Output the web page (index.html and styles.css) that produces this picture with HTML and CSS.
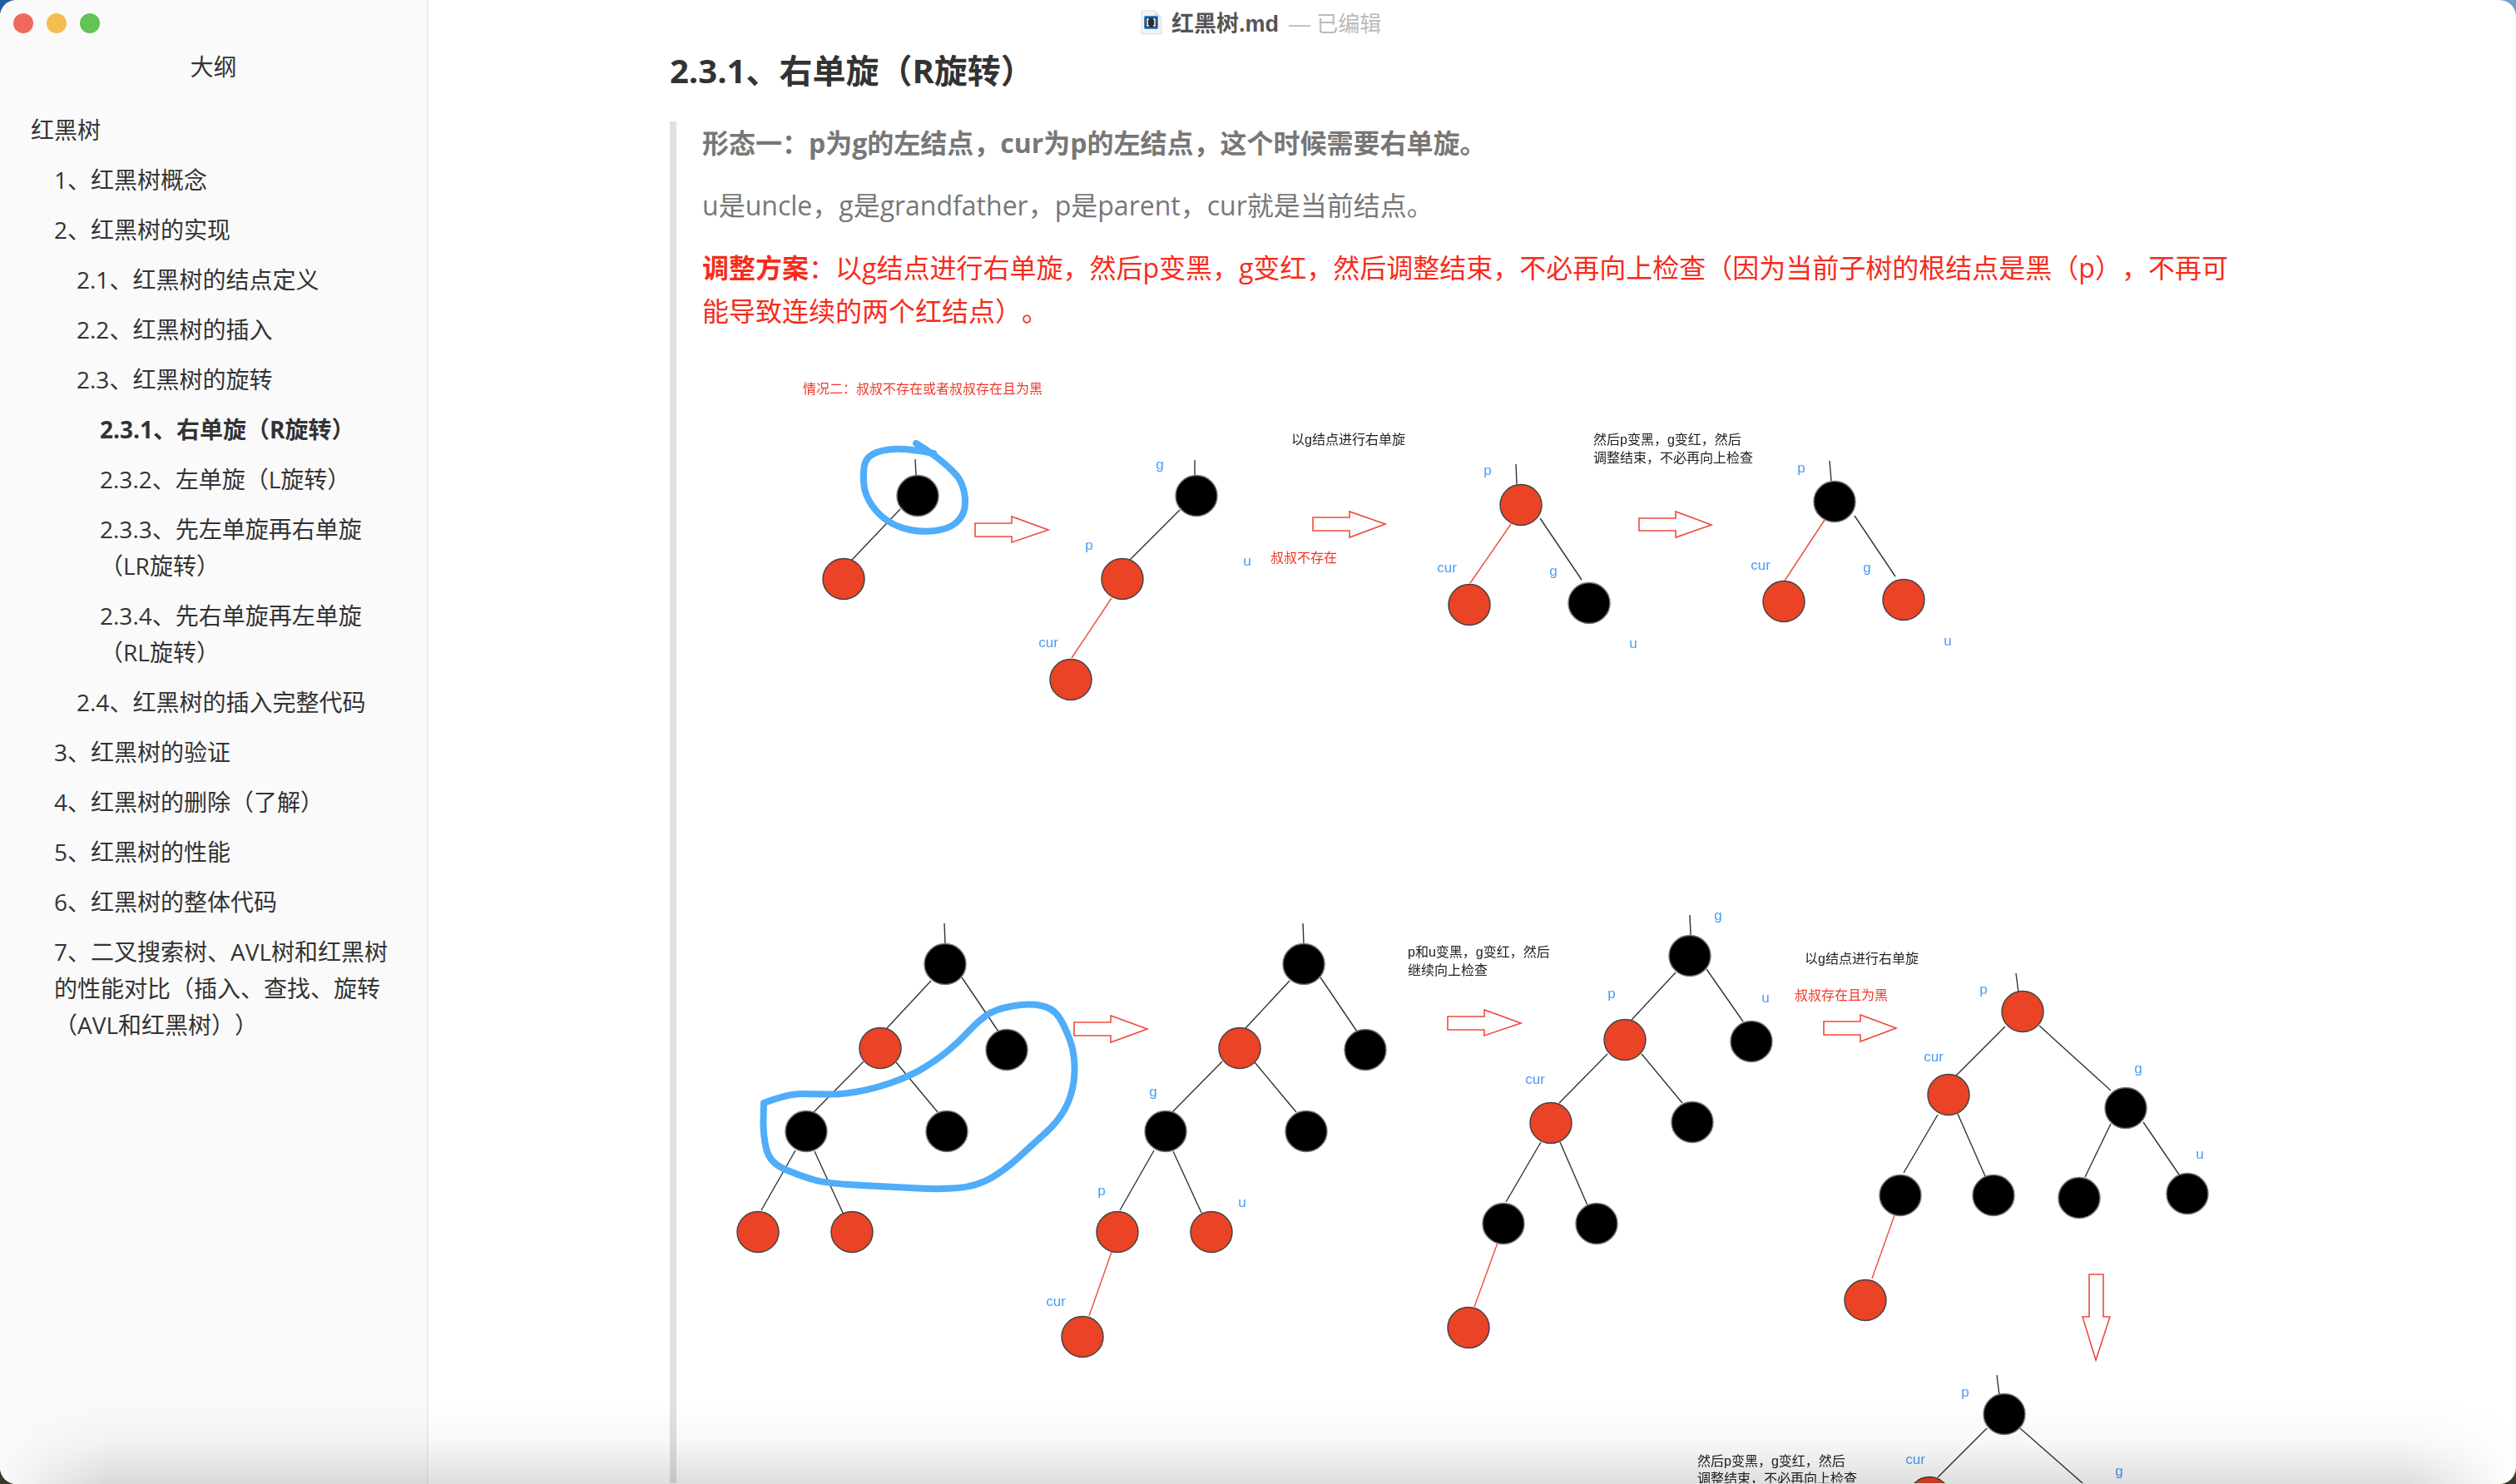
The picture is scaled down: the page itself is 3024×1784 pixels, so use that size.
FILE: index.html
```html
<!DOCTYPE html>
<html lang="zh-CN">
  <head>
    <meta charset="UTF-8" />
    <meta name="viewport" content="width=device-width, initial-scale=1.0" />
    <title>红黑树.md</title>
    <link rel="stylesheet" href="styles.css">
  </head>
  <body>
    <div class="window">
      <aside class="sidebar">
        <div class="lights">
          <span class="light light-red"></span>
          <span class="light light-yellow"></span>
          <span class="light light-green"></span>
        </div>
        <div class="sidebar-title">大纲</div>
        <ul class="outline">
          <li class="lv1">红黑树</li>
          <li class="lv2">1、红黑树概念</li>
          <li class="lv2">2、红黑树的实现</li>
          <li class="lv3">2.1、红黑树的结点定义</li>
          <li class="lv3">2.2、红黑树的插入</li>
          <li class="lv3">2.3、红黑树的旋转</li>
          <li class="lv4 active">2.3.1、右单旋（R旋转）</li>
          <li class="lv4">2.3.2、左单旋（L旋转）</li>
          <li class="lv4">2.3.3、先左单旋再右单旋<br>（LR旋转）</li>
          <li class="lv4">2.3.4、先右单旋再左单旋<br>（RL旋转）</li>
          <li class="lv3">2.4、红黑树的插入完整代码</li>
          <li class="lv2">3、红黑树的验证</li>
          <li class="lv2">4、红黑树的删除（了解）</li>
          <li class="lv2">5、红黑树的性能</li>
          <li class="lv2">6、红黑树的整体代码</li>
          <li class="lv2">7、二叉搜索树、AVL树和红黑树<br>的性能对比（插入、查找、旋转<br>（AVL和红黑树））</li>
        </ul>
      </aside>

      <main class="main">
        <h3>2.3.1、右单旋（R旋转）</h3>
        <blockquote>
          <p><strong>形态一：p为g的左结点，cur为p的左结点，这个时候需要右单旋。</strong></p>
          <p>u是uncle，g是grandfather，p是parent，cur就是当前结点。</p>
          <p class="red"><strong>调整方案</strong>：以g结点进行右单旋，然后p变黑，g变红，然后调整结束，不必再向上检查（因为当前子树的根结点是黑（p），不再可<br>能导致连续的两个红结点）。</p>

          <!-- viewBox uses page coordinates so the drawing is easy to read against the screenshot -->
          <svg class="diagram" viewBox="844 424 1850 1360" width="1850" height="1360">
            <text class="note-red" x="965" y="474">情况二：叔叔不存在或者叔叔存在且为黑</text>

            <!-- top row, first tree -->
            <line class="edge" x1="1100" y1="553" x2="1101" y2="573" />
            <line class="edge" x1="1082" y1="613" x2="1023" y2="675" />
            <ellipse class="node black" cx="1103" cy="597" rx="25" ry="24.5" />
            <ellipse class="node red" cx="1014" cy="697" rx="25" ry="24.5" />
            <path class="scribble" d="M1101 534 Q1119 545 1129.5 553.5 Q1140 562 1147.5 570 Q1155 578 1158 589 Q1161 600 1159.5 611 Q1158 622 1149 629.5 Q1140 637 1124.5 639 Q1109 641 1094 638 Q1079 635 1067.5 627.5 Q1056 620 1048 608.5 Q1040 597 1038.5 585 Q1037 573 1038.5 562.5 Q1040 552 1049 547 Q1058 542 1073.5 541 Q1089 540 1122 546" />
            <polygon class="arrow" points="1172,630 1216,630 1216,622 1260,638 1216,653 1216,646 1172,646" />

            <!-- top row, second tree -->
            <line class="edge" x1="1436" y1="554" x2="1436" y2="573" />
            <line class="edge" x1="1418" y1="614" x2="1358" y2="674" />
            <line class="edge-red" x1="1336" y1="720" x2="1288" y2="792" />
            <ellipse class="node black" cx="1438" cy="597" rx="25" ry="24.5" />
            <ellipse class="node red" cx="1349" cy="697" rx="25" ry="24.5" />
            <ellipse class="node red" cx="1287" cy="818" rx="25" ry="24.5" />
            <text class="label" x="1394" y="565" text-anchor="middle">g</text>
            <text class="label" x="1309" y="662" text-anchor="middle">p</text>
            <text class="label" x="1499" y="681" text-anchor="middle">u</text>
            <text class="label" x="1260" y="779" text-anchor="middle">cur</text>
            <text class="note" x="1552" y="535">以g结点进行右单旋</text>
            <text class="note-red" x="1527" y="677">叔叔不存在</text>
            <polygon class="arrow" points="1578,623 1622,623 1622,616 1665,631 1622,647 1622,639 1578,639" />

            <!-- top row, third tree -->
            <line class="edge" x1="1822" y1="559" x2="1823" y2="583" />
            <line class="edge-red" x1="1816" y1="631" x2="1767" y2="702" />
            <line class="edge" x1="1851" y1="624" x2="1901" y2="698" />
            <ellipse class="node red" cx="1828" cy="608" rx="25" ry="24.5" />
            <ellipse class="node red" cx="1766" cy="728" rx="25" ry="24.5" />
            <ellipse class="node black" cx="1910" cy="726" rx="25" ry="24.5" />
            <text class="label" x="1788" y="572" text-anchor="middle">p</text>
            <text class="label" x="1739" y="689" text-anchor="middle">cur</text>
            <text class="label" x="1867" y="693" text-anchor="middle">g</text>
            <text class="label" x="1963" y="780" text-anchor="middle">u</text>
            <text class="note" x="1915" y="535">然后p变黑，g变红，然后</text>
            <text class="note" x="1915" y="557">调整结束，不必再向上检查</text>
            <polygon class="arrow" points="1970,624 2014,624 2014,616 2057,632 2014,647 2014,639 1970,639" />

            <!-- top row, fourth tree -->
            <line class="edge" x1="2199" y1="555" x2="2201" y2="579" />
            <line class="edge-red" x1="2193" y1="626" x2="2145" y2="699" />
            <line class="edge" x1="2229" y1="621" x2="2278" y2="694" />
            <ellipse class="node black" cx="2205" cy="604" rx="25" ry="24.5" />
            <ellipse class="node red" cx="2144" cy="724" rx="25" ry="24.5" />
            <ellipse class="node red" cx="2288" cy="722" rx="25" ry="24.5" />
            <text class="label" x="2165" y="569" text-anchor="middle">p</text>
            <text class="label" x="2116" y="686" text-anchor="middle">cur</text>
            <text class="label" x="2244" y="689" text-anchor="middle">g</text>
            <text class="label" x="2341" y="777" text-anchor="middle">u</text>

            <!-- bottom row, first tree -->
            <line class="edge" x1="1135" y1="1111" x2="1136" y2="1136" />
            <line class="edge" x1="1119" y1="1180" x2="1066" y2="1237" />
            <line class="edge" x1="1156" y1="1176" x2="1200" y2="1241" />
            <line class="edge" x1="1038" y1="1277" x2="978" y2="1338" />
            <line class="edge" x1="1077" y1="1278" x2="1127" y2="1338" />
            <line class="edge" x1="956" y1="1384" x2="915" y2="1456" />
            <line class="edge" x1="979" y1="1385" x2="1013" y2="1459" />
            <ellipse class="node black" cx="1136" cy="1160" rx="25" ry="24.5" />
            <ellipse class="node red" cx="1058" cy="1261" rx="25" ry="24.5" />
            <ellipse class="node black" cx="1210" cy="1263" rx="25" ry="24.5" />
            <ellipse class="node black" cx="969" cy="1361" rx="25" ry="24.5" />
            <ellipse class="node black" cx="1138" cy="1361" rx="25" ry="24.5" />
            <ellipse class="node red" cx="911" cy="1482" rx="25" ry="24.5" />
            <ellipse class="node red" cx="1024" cy="1482" rx="25" ry="24.5" />
            <path class="scribble" d="M918 1327 Q947 1316 963 1316 Q979 1316 994 1316.5 Q1009 1317 1029.5 1313.5 Q1050 1310 1071.5 1302.5 Q1093 1295 1109 1285.5 Q1125 1276 1139 1264.5 Q1153 1253 1163.5 1241.5 Q1174 1230 1185 1222 Q1196 1214 1216.5 1210.5 Q1237 1207 1251.5 1210 Q1266 1213 1273 1224 Q1280 1235 1286 1251.5 Q1292 1268 1291.5 1289 Q1291 1310 1283 1328 Q1275 1346 1257 1362.5 Q1239 1379 1223 1393.5 Q1207 1408 1190.5 1417.5 Q1174 1427 1152.5 1429 Q1131 1431 1104 1429.5 Q1077 1428 1036 1426 Q995 1424 979 1419.5 Q963 1415 944 1407 Q925 1399 921 1382 Q917 1365 917.5 1346 L918 1327" />
            <polygon class="arrow" points="1291,1230 1335,1230 1335,1222 1379,1238 1335,1254 1335,1246 1291,1246" />

            <!-- bottom row, second tree -->
            <line class="edge" x1="1566" y1="1111" x2="1567" y2="1136" />
            <line class="edge" x1="1550" y1="1180" x2="1497" y2="1237" />
            <line class="edge" x1="1587" y1="1176" x2="1631" y2="1241" />
            <line class="edge" x1="1469" y1="1277" x2="1409" y2="1338" />
            <line class="edge" x1="1508" y1="1278" x2="1558" y2="1338" />
            <line class="edge" x1="1387" y1="1384" x2="1346" y2="1456" />
            <line class="edge" x1="1410" y1="1385" x2="1444" y2="1459" />
            <line class="edge-red" x1="1336" y1="1506" x2="1309" y2="1583" />
            <ellipse class="node black" cx="1567" cy="1160" rx="25" ry="24.5" />
            <ellipse class="node red" cx="1490" cy="1261" rx="25" ry="24.5" />
            <ellipse class="node black" cx="1641" cy="1263" rx="25" ry="24.5" />
            <ellipse class="node black" cx="1401" cy="1361" rx="25" ry="24.5" />
            <ellipse class="node black" cx="1570" cy="1361" rx="25" ry="24.5" />
            <ellipse class="node red" cx="1343" cy="1482" rx="25" ry="24.5" />
            <ellipse class="node red" cx="1456" cy="1482" rx="25" ry="24.5" />
            <ellipse class="node red" cx="1301" cy="1608" rx="25" ry="24.5" />
            <text class="label" x="1386" y="1319" text-anchor="middle">g</text>
            <text class="label" x="1324" y="1438" text-anchor="middle">p</text>
            <text class="label" x="1493" y="1452" text-anchor="middle">u</text>
            <text class="label" x="1269" y="1571" text-anchor="middle">cur</text>

            <!-- bottom row, third tree -->
            <text class="note" x="1692" y="1151">p和u变黑，g变红，然后</text>
            <text class="note" x="1692" y="1173">继续向上检查</text>
            <polygon class="arrow" points="1740,1223 1784,1223 1784,1215 1828,1231 1784,1246 1784,1239 1740,1239" />
            <line class="edge" x1="2031" y1="1101" x2="2032" y2="1125" />
            <line class="edge" x1="2014" y1="1170" x2="1961" y2="1227" />
            <line class="edge" x1="2051" y1="1166" x2="2095" y2="1229" />
            <line class="edge" x1="1932" y1="1268" x2="1874" y2="1327" />
            <line class="edge" x1="1973" y1="1268" x2="2022" y2="1327" />
            <line class="edge" x1="1852" y1="1374" x2="1810" y2="1446" />
            <line class="edge" x1="1875" y1="1374" x2="1908" y2="1450" />
            <line class="edge-red" x1="1800" y1="1495" x2="1772" y2="1572" />
            <ellipse class="node black" cx="2031" cy="1150" rx="25" ry="24.5" />
            <ellipse class="node red" cx="1953" cy="1251" rx="25" ry="24.5" />
            <ellipse class="node black" cx="2105" cy="1253" rx="25" ry="24.5" />
            <ellipse class="node red" cx="1864" cy="1351" rx="25" ry="24.5" />
            <ellipse class="node black" cx="2034" cy="1350" rx="25" ry="24.5" />
            <ellipse class="node black" cx="1807" cy="1472" rx="25" ry="24.5" />
            <ellipse class="node black" cx="1919" cy="1472" rx="25" ry="24.5" />
            <ellipse class="node red" cx="1765" cy="1597" rx="25" ry="24.5" />
            <text class="label" x="2065" y="1107" text-anchor="middle">g</text>
            <text class="label" x="1937" y="1201" text-anchor="middle">p</text>
            <text class="label" x="2122" y="1206" text-anchor="middle">u</text>
            <text class="label" x="1845" y="1304" text-anchor="middle">cur</text>

            <!-- bottom row, fourth tree -->
            <text class="note" x="2169" y="1159">以g结点进行右单旋</text>
            <text class="note-red" x="2157" y="1203">叔叔存在且为黑</text>
            <polygon class="arrow" points="2192,1229 2236,1229 2236,1221 2279,1237 2236,1253 2236,1245 2192,1245" />
            <line class="edge" x1="2423" y1="1171" x2="2426" y2="1194" />
            <line class="edge" x1="2410" y1="1235" x2="2351" y2="1294" />
            <line class="edge" x1="2451" y1="1234" x2="2537" y2="1312" />
            <line class="edge" x1="2329" y1="1341" x2="2288" y2="1411" />
            <line class="edge" x1="2353" y1="1340" x2="2386" y2="1415" />
            <line class="edge" x1="2537" y1="1352" x2="2506" y2="1416" />
            <line class="edge" x1="2576" y1="1350" x2="2619" y2="1413" />
            <line class="edge-red" x1="2277" y1="1462" x2="2250" y2="1538" />
            <ellipse class="node red" cx="2431" cy="1217" rx="25" ry="24.5" />
            <ellipse class="node red" cx="2342" cy="1317" rx="25" ry="24.5" />
            <ellipse class="node black" cx="2555" cy="1333" rx="25" ry="24.5" />
            <ellipse class="node black" cx="2284" cy="1438" rx="25" ry="24.5" />
            <ellipse class="node black" cx="2396" cy="1438" rx="25" ry="24.5" />
            <ellipse class="node black" cx="2499" cy="1441" rx="25" ry="24.5" />
            <ellipse class="node black" cx="2629" cy="1436" rx="25" ry="24.5" />
            <ellipse class="node red" cx="2242" cy="1564" rx="25" ry="24.5" />
            <text class="label" x="2384" y="1196" text-anchor="middle">p</text>
            <text class="label" x="2324" y="1277" text-anchor="middle">cur</text>
            <text class="label" x="2570" y="1291" text-anchor="middle">g</text>
            <text class="label" x="2644" y="1394" text-anchor="middle">u</text>
            <polygon class="arrow" points="2511,1533 2528,1533 2528,1584 2536,1584 2519,1636 2503,1584 2511,1584" />

            <!-- last tree, cut off by the window -->
            <line class="edge" x1="2400" y1="1654" x2="2403" y2="1678" />
            <line class="edge" x1="2388" y1="1718" x2="2329" y2="1777" />
            <line class="edge" x1="2428" y1="1718" x2="2503" y2="1784" />
            <ellipse class="node black" cx="2409" cy="1701" rx="25" ry="24.5" />
            <ellipse class="node red" cx="2319" cy="1801" rx="25" ry="24.5" />
            <text class="label" x="2362" y="1680" text-anchor="middle">p</text>
            <text class="label" x="2302" y="1761" text-anchor="middle">cur</text>
            <text class="label" x="2547" y="1775" text-anchor="middle">g</text>
            <text class="note" x="2040" y="1763">然后p变黑，g变红，然后</text>
            <text class="note" x="2040" y="1784">调整结束，不必再向上检查</text>
          </svg>
        </blockquote>
      </main>

      <div class="titlebar">
        <svg class="file-icon" viewBox="0 0 26 30" width="26" height="30">
          <path d="M1 1 H17 L25 9 V29 H1 Z" fill="#f4f4f4" stroke="#dcdcdc" />
          <path d="M17 1 V9 H25 Z" fill="#e2e2e2" />
          <rect x="4" y="7" width="17" height="16" rx="2" fill="#2f7cc6" />
          <rect x="6" y="9" width="13" height="12" fill="#22303c" />
          <path d="M10 11 H8 V19 H10 M15 11 H17 V19 H15" fill="none" stroke="#fff" stroke-width="1.5" />
        </svg>
        <span class="file-name">红黑树.md</span>
        <span class="file-state">— 已编辑</span>
      </div>
      <div class="bottom-fade"></div>
    </div>
  </body>
</html>
```

FILE: styles.css
```css
html,
body {
  margin: 0;
  padding: 0;
  height: 100%;
  overflow: hidden;
}
body {
  font-family: "Open Sans", "Noto Sans CJK SC", sans-serif;
  text-spacing-trim: space-all;
  background:
    linear-gradient(to right, #1f5f9e, #6f9fd0) top / 100% 60px no-repeat,
    #3a3a2c;
}
.window {
  position: relative;
  display: flex;
  height: 1784px;
  background-color: #fff;
  border-radius: 20px;
  overflow: hidden;
}

/* sidebar */
.sidebar {
  flex: 0 0 513px;
  background-color: #fafafa;
  border-right: 2px solid #eeeeee;
  color: #333;
  font-size: 28px;
}
.lights {
  display: flex;
  gap: 16px;
  padding: 16px 0 0 16px;
}
.light {
  width: 24px;
  height: 24px;
  border-radius: 50%;
}
.light-red {
  background-color: #ee6a5f;
}
.light-yellow {
  background-color: #f5bd4f;
}
.light-green {
  background-color: #61c454;
}
.sidebar-title {
  margin-top: 18px;
  line-height: 44px;
  text-align: center;
}
.outline {
  list-style: none;
  margin: 24px 0 0;
  padding: 0;
}
.outline li {
  padding: 8px 0;
  line-height: 44px;
  white-space: nowrap;
}
.outline .lv1 {
  padding-left: 37px;
}
.outline .lv2 {
  padding-left: 65px;
}
.outline .lv3 {
  padding-left: 92px;
}
.outline .lv4 {
  padding-left: 120px;
}
.outline .active {
  font-weight: bold;
}

/* document */
.main {
  flex: 1;
  padding-left: 290px;
  min-width: 0;
}
h3 {
  margin: 0 0 34px;
  padding-top: 58px;
  height: 54px;
  line-height: 54px;
  font-size: 40px;
  font-weight: bold;
  color: #333;
}
blockquote {
  margin: 0;
  width: 1880px;
  padding-left: 31px;
  border-left: 8px solid #dfe2e5;
  color: #777;
  font-size: 32px;
  line-height: 51.2px;
}
blockquote p {
  margin: 0 0 24px;
}
blockquote p.red {
  color: #f62c1c;
}
.diagram {
  display: block;
  margin-top: 1px;
  filter: blur(0.5px);
}

/* diagram parts */
.node {
  stroke-width: 1.5;
}
.node.black {
  fill: #000;
  stroke: #777;
}
.node.red {
  fill: #ea4325;
  stroke: #444;
}
.edge {
  stroke: #333;
  stroke-width: 1.4;
}
.edge-red {
  stroke: #ee4b3c;
  stroke-width: 1.4;
}
.arrow {
  fill: #fff;
  stroke: #ee4b3c;
  stroke-width: 1.6;
}
.scribble {
  fill: none;
  stroke: #4fadf9;
  stroke-width: 8;
  stroke-linecap: round;
  stroke-linejoin: round;
}
.label {
  fill: #4a9df8;
  font-family: "Liberation Sans", sans-serif;
  font-size: 17px;
}
.note,
.note-red {
  font-family: "Liberation Sans", "Noto Sans CJK SC", sans-serif;
  font-size: 16px;
}
.note {
  fill: #222;
}
.note-red {
  fill: #f0392b;
}

/* title bar and window shadow lie over the page */
.titlebar {
  position: absolute;
  top: 11px;
  left: 1371px;
  display: flex;
  align-items: center;
  height: 30px;
  font-family: "Liberation Sans", "Noto Sans CJK SC", sans-serif;
  font-size: 26px;
}
.file-icon {
  margin-top: 2px;
  margin-right: 11px;
}
.file-name {
  font-size: 27px;
  font-weight: bold;
  color: #555;
}
.file-state {
  margin-left: 12px;
  color: #bbb;
}
.bottom-fade {
  position: absolute;
  left: 0;
  right: 0;
  bottom: 0;
  height: 100px;
  background: linear-gradient(to bottom, rgba(0, 0, 0, 0), rgba(0, 0, 0, 0.03) 50%, rgba(0, 0, 0, 0.13));
  -webkit-mask-image: linear-gradient(to right, transparent, #000 130px, #000 calc(100% - 130px), transparent);
  mask-image: linear-gradient(to right, transparent, #000 130px, #000 calc(100% - 130px), transparent);
  pointer-events: none;
}
```
